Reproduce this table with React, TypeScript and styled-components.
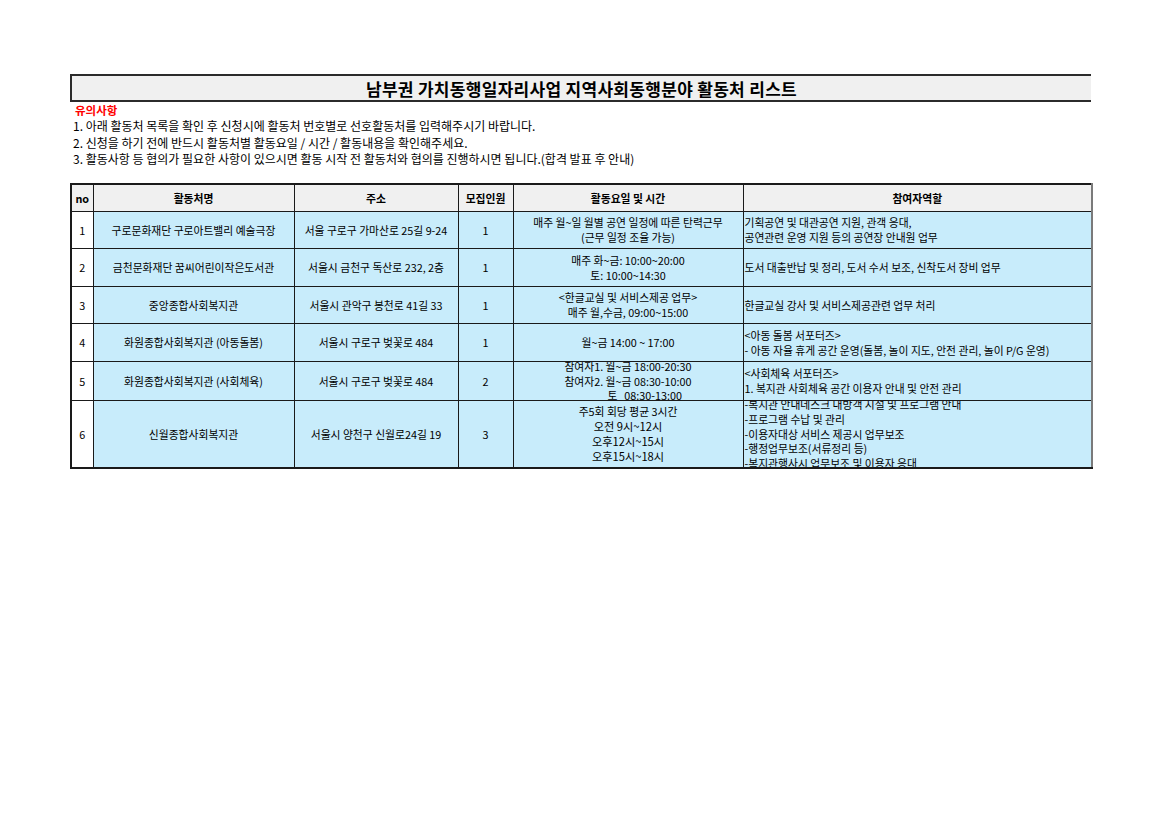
import React from 'react'
import styled, { createGlobalStyle } from 'styled-components'

const GlobalStyle = createGlobalStyle`
    html, body {
        margin: 0;
        padding: 0;
        background: #ffffff;
    }
    body {
        font-family: 'Noto Sans CJK KR', 'Noto Sans', sans-serif;
        color: #000;
    }
`

const Page = styled.div`
    width: 1170px;
    height: 827px;
    box-sizing: border-box;
    padding: 74px 0 0 70px;
`

const Sheet = styled.div`
    width: 1021px;
    display: flex;
    flex-direction: column;
`

const TitleBar = styled.div`
    height: 28px;
    box-sizing: border-box;
    border: 2px solid #2b2b2b;
    border-right: none;
    background: #f0f0f0;
    display: flex;
    align-items: center;
    justify-content: center;
    font-size: 17px;
    font-weight: 700;
    letter-spacing: 0.3px;
`

const Notes = styled.div`
    padding: 1px 0 0 3px;
    height: 81px;
    box-sizing: border-box;
    display: flex;
    flex-direction: column;
`

const NoteHead = styled.div`
    color: #ff0000;
    font-weight: 700;
    font-size: 11.5px;
    line-height: 15px;
    padding-left: 2px;
`

const NoteLine = styled.div`
    font-size: 12px;
    line-height: 16.5px;
`

const Table = styled.table`
    width: 1021px;
    border-collapse: collapse;
    table-layout: fixed;
    border-top: 2px solid #1a1a1a;
    border-left: 2px solid #1a1a1a;
    border-bottom: 2px solid #1a1a1a;
    border-right: 2px solid #7a7a7a;
`

const Th = styled.th`
    background: #f0f0f0;
    border: 1px solid #1a1a1a;
    height: 26px;
    padding: 0;
    font-size: 10.8px;
    font-weight: 700;
    text-align: center;
`

const Td = styled.td<{ $blue?: boolean }>`
    background: ${(p) => (p.$blue ? '#c8ecfb' : '#ffffff')};
    border: 1px solid #1a1a1a;
    padding: 0;
    vertical-align: middle;
`

const CellBox = styled.div<{ $h: number; $left?: boolean }>`
    height: ${(p) => p.$h}px;
    overflow: hidden;
    display: flex;
    flex-direction: column;
    justify-content: center;
    align-items: ${(p) => (p.$left ? 'flex-start' : 'center')};
    padding: ${(p) => (p.$left ? '0 0 0 1px' : '0')};
    font-size: 10.8px;
    line-height: 15px;
    text-align: ${(p) => (p.$left ? 'left' : 'center')};
    white-space: nowrap;
`

const Line = styled.div<{ $size?: number; $lh?: number }>`
    font-size: ${(p) => p.$size ?? 10.8}px;
    line-height: ${(p) => p.$lh ?? 15}px;
`

const LeftBlock = styled.div`
    display: flex;
    flex-direction: column;
    align-items: flex-start;
`

const Indent = styled.span<{ $w: number }>`
    display: inline-block;
    padding-left: ${(p) => p.$w}px;
`

type Row = {
    no: number
    name: string
    addr: string
    count: number
    schedule: React.ReactNode
    role: string[]
    h: number
    roleLh?: number
}

const lines = (arr: string[], size?: number, lh?: number) =>
    arr.map((t, i) => (
        <Line key={i} $size={size} $lh={lh}>
            {t}
        </Line>
    ))

const rows: Row[] = [
    {
        no: 1,
        name: '구로문화재단 구로아트밸리 예술극장',
        addr: '서울 구로구 가마산로 25길 9-24',
        count: 1,
        schedule: lines(['매주 월~일 월별 공연 일정에 따른 탄력근무', '(근무 일정 조율 가능)']),
        role: ['기획공연 및 대관공연 지원, 관객 응대,', '공연관련 운영 지원 등의 공연장 안내원 업무'],
        h: 36,
    },
    {
        no: 2,
        name: '금천문화재단 꿈씨어린이작은도서관',
        addr: '서울시 금천구 독산로 232, 2층',
        count: 1,
        schedule: lines(['매주 화~금: 10:00~20:00', '토: 10:00~14:30']),
        role: ['도서 대출반납 및 정리, 도서 수서 보조, 신착도서 장비 업무'],
        h: 37,
    },
    {
        no: 3,
        name: '중앙종합사회복지관',
        addr: '서울시 관악구 봉천로 41길 33',
        count: 1,
        schedule: lines(['<한글교실 및 서비스제공 업무>', '매주 월,수금, 09:00~15:00']),
        role: ['한글교실 강사 및 서비스제공관련 업무 처리'],
        h: 36,
    },
    {
        no: 4,
        name: '화원종합사회복지관 (아동돌봄)',
        addr: '서울시 구로구 벚꽃로 484',
        count: 1,
        schedule: lines(['월~금 14:00 ~ 17:00']),
        role: ['<아동 돌봄 서포터즈>', '- 아동 자율 휴게 공간 운영(돌봄, 놀이 지도, 안전 관리, 놀이 P/G 운영)'],
        h: 37,
    },
    {
        no: 5,
        name: '화원종합사회복지관 (사회체육)',
        addr: '서울시 구로구 벚꽃로 484',
        count: 2,
        schedule: (
            <LeftBlock>
                <Line $lh={14.5}>참여자1. 월~금 18:00-20:30</Line>
                <Line $lh={14.5}>참여자2. 월~금 08:30-10:00</Line>
                <Line $lh={14.5}>
                    <Indent $w={43}>토</Indent>
                    <Indent $w={7}>08:30-13:00</Indent>
                </Line>
            </LeftBlock>
        ),
        role: ['<사회체육 서포터즈>', '1. 복지관 사회체육 공간 이용자 안내 및 안전 관리'],
        h: 38,
    },
    {
        no: 6,
        name: '신월종합사회복지관',
        addr: '서울시 양천구 신월로24길 19',
        count: 3,
        schedule: (
            <>
                <Line>주5회 회당 평균 3시간</Line>
                {lines(['오전 9시~12시', '오후12시~15시', '오후15시~18시'], 11.2)}
            </>
        ),
        role: [
            '-복지관 안내데스크 내방객 시설 및 프로그램 안내',
            '-프로그램 수납 및 관리',
            '-이용자대상 서비스 제공시 업무보조',
            '-행정업무보조(서류정리 등)',
            '-복지관행사시 업무보조 및 이용자 응대',
        ],
        h: 66,
        roleLh: 14.7,
    },
]

const App = () => {
    return (
        <Page>
            <GlobalStyle />
            <Sheet>
                <TitleBar>남부권 가치동행일자리사업 지역사회동행분야 활동처 리스트</TitleBar>
                <Notes>
                    <NoteHead>유의사항</NoteHead>
                    <NoteLine>1. 아래 활동처 목록을 확인 후 신청시에 활동처 번호별로 선호활동처를 입력해주시기 바랍니다.</NoteLine>
                    <NoteLine>2. 신청을 하기 전에 반드시 활동처별 활동요일 / 시간 / 활동내용을 확인해주세요.</NoteLine>
                    <NoteLine>3. 활동사항 등 협의가 필요한 사항이 있으시면 활동 시작 전 활동처와 협의를 진행하시면 됩니다.(합격 발표 후 안내)</NoteLine>
                </Notes>
                <Table>
                    <colgroup>
                        <col style={{ width: 22 }} />
                        <col style={{ width: 201 }} />
                        <col style={{ width: 164 }} />
                        <col style={{ width: 55 }} />
                        <col style={{ width: 230 }} />
                        <col style={{ width: 349 }} />
                    </colgroup>
                    <thead>
                        <tr>
                            <Th>no</Th>
                            <Th>활동처명</Th>
                            <Th>주소</Th>
                            <Th>모집인원</Th>
                            <Th>활동요일 및 시간</Th>
                            <Th>참여자역할</Th>
                        </tr>
                    </thead>
                    <tbody>
                        {rows.map((r) => (
                            <tr key={r.no}>
                                <Td>
                                    <CellBox $h={r.h}>{r.no}</CellBox>
                                </Td>
                                <Td $blue>
                                    <CellBox $h={r.h}>{r.name}</CellBox>
                                </Td>
                                <Td $blue>
                                    <CellBox $h={r.h}>{r.addr}</CellBox>
                                </Td>
                                <Td $blue>
                                    <CellBox $h={r.h}>{r.count}</CellBox>
                                </Td>
                                <Td $blue>
                                    <CellBox $h={r.h}>{r.schedule}</CellBox>
                                </Td>
                                <Td $blue>
                                    <CellBox $h={r.h} $left>
                                        {lines(r.role, 10.8, r.roleLh)}
                                    </CellBox>
                                </Td>
                            </tr>
                        ))}
                    </tbody>
                </Table>
            </Sheet>
        </Page>
    )
}

export default App
